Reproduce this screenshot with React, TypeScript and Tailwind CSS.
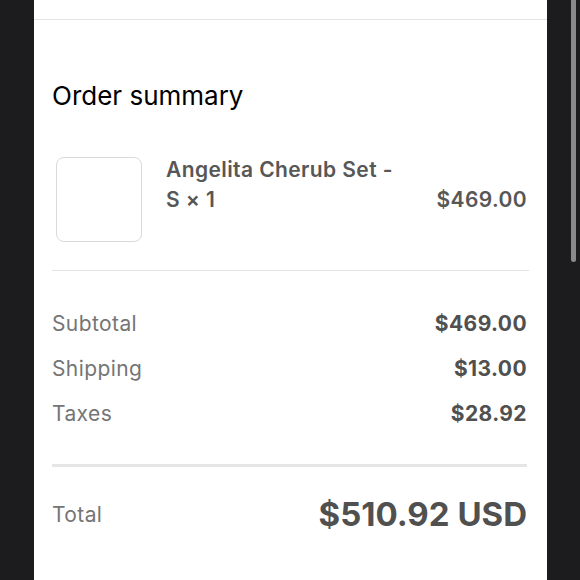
export default function App() {
  const rows = [
    { label: "Subtotal", value: "$469.00" },
    { label: "Shipping", value: "$13.00" },
    { label: "Taxes", value: "$28.92" },
  ];

  return (
    <div className="relative flex w-[580px] h-[580px] overflow-hidden bg-[#1c1c1e] font-['Inter','Noto_Sans',sans-serif]">
      <div className="w-[34px] shrink-0" />
      <div className="w-[513px] shrink-0 bg-white">
        <div className="h-[20px] border-b border-[#e3e3e3]" />
        <div className="pl-[18px] pr-[20px]">
          <h2 className="mt-[60px] h-[32px] leading-[32px] text-[26px] text-black">
            Order summary
          </h2>

          <div className="mt-[45px] flex items-start">
            <div className="ml-[4px] w-[86px] h-[85px] shrink-0 rounded-[8px] border border-[#d9d9d9] bg-white" />
            <div className="ml-[24px] -mt-[2px] flex-1 text-[21px] tracking-[0.4px] leading-[30px] font-semibold text-[#575757]">
              Angelita Cherub Set -
              <br />S × 1
            </div>
            <div className="mt-[28px] text-[21px] tracking-[0.4px] leading-[30px] font-semibold text-[#575757]">
              $469.00
            </div>
          </div>

          <div className="mt-[28px] -mr-[2px] h-px bg-[#e3e3e3]" />

          <div className="pt-[30px] pb-[28px]">
            {rows.map((r) => (
              <div key={r.label} className="flex h-[45px] items-center justify-between text-[21px] tracking-[0.4px]">
                <span className="text-[#757575]">{r.label}</span>
                <span className="font-bold text-[#505050]">{r.value}</span>
              </div>
            ))}
          </div>

          <div className="h-[3px] bg-[#e6e6e6]" />

          <div className="flex h-[96px] items-center justify-between">
            <span className="text-[21px] tracking-[0.4px] text-[#757575]">Total</span>
            <span className="text-[33px] font-bold text-[#505050]">$510.92 USD</span>
          </div>
        </div>
      </div>
      <div className="absolute right-[4px] top-0 w-[5px] h-[262px] rounded-b-full bg-[#8a8a8a]" />
    </div>
  );
}
